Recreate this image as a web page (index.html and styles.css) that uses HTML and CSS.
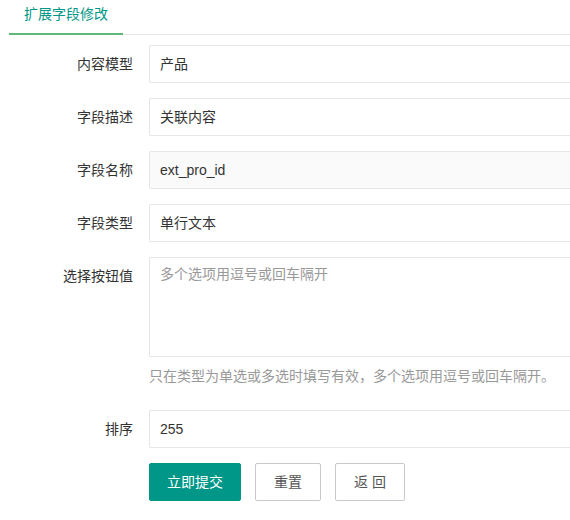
FILE: index.html
```html
<!DOCTYPE html>
<html lang="zh-CN">
<head>
<meta charset="utf-8">
<title>扩展字段修改</title>
<link rel="stylesheet" href="styles.css">
</head>
<body>
<div class="tab">
  <ul class="tab-title">
    <li class="this">扩展字段修改</li>
  </ul>
</div>
<form class="form">
  <div class="form-item">
    <label class="form-label">内容模型</label>
    <div class="input-block"><div class="input">产品</div></div>
  </div>
  <div class="form-item">
    <label class="form-label">字段描述</label>
    <div class="input-block"><div class="input">关联内容</div></div>
  </div>
  <div class="form-item">
    <label class="form-label">字段名称</label>
    <div class="input-block"><div class="input readonly">ext_pro_id</div></div>
  </div>
  <div class="form-item">
    <label class="form-label">字段类型</label>
    <div class="input-block"><div class="input">单行文本</div></div>
  </div>
  <div class="form-item">
    <label class="form-label">选择按钮值</label>
    <div class="input-block">
      <div class="textarea placeholder">多个选项用逗号或回车隔开</div>
      <div class="form-mid">只在类型为单选或多选时填写有效，多个选项用逗号或回车隔开。</div>
    </div>
  </div>
  <div class="form-item">
    <label class="form-label">排序</label>
    <div class="input-block"><div class="input">255</div></div>
  </div>
  <div class="form-item">
    <div class="input-block offset buttons">
      <button type="button" class="btn btn-normal">立即提交</button>
      <button type="button" class="btn btn-primary">重置</button>
      <button type="button" class="btn btn-primary">返 回</button>
    </div>
  </div>
</form>
</body>
</html>
```

FILE: styles.css
```css
html, body {
  margin: 0;
  padding: 0;
  background: #fff;
}
body {
  font-family: "Liberation Sans", "Noto Sans CJK SC", sans-serif;
  font-size: 14px;
  color: #333;
  width: 570px;
}
.tab {
  padding-left: 9px;
}
.tab-title {
  margin: 0;
  padding: 0;
  list-style: none;
  display: flex;
  height: 34px;
  border-bottom: 1px solid #e6e6e6;
}
.tab-title li {
  padding: 0 15px;
  line-height: 28px;
  height: 35px;
  box-sizing: border-box;
  color: #009688;
}
.tab-title li.this {
  border-bottom: 2px solid #5fb878;
}
.form {
  margin-top: 10px;
}
.form-item {
  display: flex;
  margin-bottom: 15px;
}
.form-label {
  width: 149px;
  box-sizing: border-box;
  padding: 9px 16px 9px 0;
  line-height: 20px;
  text-align: right;
  flex-shrink: 0;
}
.input-block {
  flex: 1;
  min-width: 0;
}
.input-block.offset {
  margin-left: 149px;
}
.input {
  height: 38px;
  box-sizing: border-box;
  border: 1px solid #e6e6e6;
  border-right: none;
  border-radius: 2px 0 0 2px;
  padding-left: 10px;
  line-height: 36px;
  background: #fff;
}
.input.readonly {
  background: #fafafa;
}
.textarea {
  height: 100px;
  box-sizing: border-box;
  border: 1px solid #e6e6e6;
  border-right: none;
  border-radius: 2px 0 0 2px;
  padding: 6px 10px;
  line-height: 20px;
}
.placeholder {
  color: #999;
}
.form-mid {
  padding: 9px 0;
  line-height: 20px;
  color: #999;
}
.buttons {
  display: flex;
  gap: 14px;
}
.btn {
  height: 38px;
  line-height: 36px;
  padding: 0 18px;
  font-family: inherit;
  font-size: 14px;
  border-radius: 2px;
  box-sizing: border-box;
  cursor: pointer;
  white-space: pre;
}
.btn-normal {
  background: #009688;
  border: 1px solid #009688;
  color: #fff;
  padding: 0 17px;
}
.btn-primary {
  background: #fff;
  border: 1px solid #c9c9c9;
  color: #555;
}
```
